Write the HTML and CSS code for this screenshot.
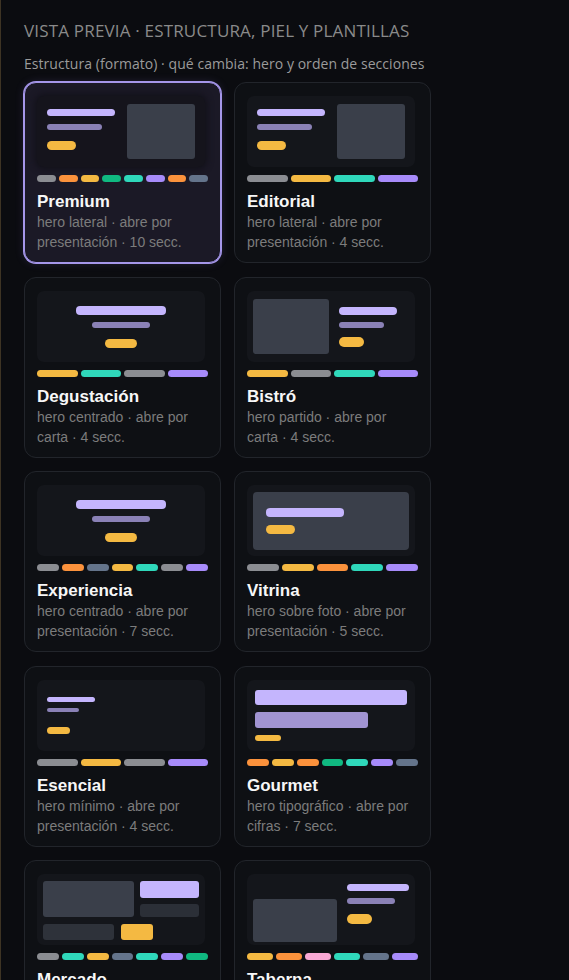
FILE: index.html
```html
<!DOCTYPE html>
<html lang="es">
<head>
<meta charset="utf-8">
<title>Vista previa</title>
<link rel="stylesheet" href="styles.css">
</head>
<body>
<main class="page">
  <h1 class="title">VISTA PREVIA · ESTRUCTURA, PIEL Y PLANTILLAS</h1>
  <p class="subtitle">Estructura (formato) · qué cambia: hero y orden de secciones</p>

  <div class="grid">
    <!-- Premium -->
    <div class="card selected">
      <div class="thumb t-lateral">
        <div class="col">
          <span class="l1"></span><span class="l2"></span><span class="btn"></span>
        </div>
        <span class="img"></span>
      </div>
      <div class="bars">
        <span class="seg gray"></span><span class="seg orange"></span><span class="seg yellow"></span><span class="seg green"></span><span class="seg teal"></span><span class="seg purple"></span><span class="seg orange"></span><span class="seg slate"></span>
      </div>
      <div class="name">Premium</div>
      <div class="desc">hero lateral · abre por presentación · 10 secc.</div>
    </div>

    <!-- Editorial -->
    <div class="card">
      <div class="thumb t-lateral">
        <div class="col">
          <span class="l1"></span><span class="l2"></span><span class="btn"></span>
        </div>
        <span class="img"></span>
      </div>
      <div class="bars">
        <span class="seg gray"></span><span class="seg yellow"></span><span class="seg teal"></span><span class="seg purple"></span>
      </div>
      <div class="name">Editorial</div>
      <div class="desc">hero lateral · abre por presentación · 4 secc.</div>
    </div>

    <!-- Degustación -->
    <div class="card">
      <div class="thumb t-center">
        <span class="l1"></span><span class="l2"></span><span class="btn"></span>
      </div>
      <div class="bars">
        <span class="seg yellow"></span><span class="seg teal"></span><span class="seg gray"></span><span class="seg purple"></span>
      </div>
      <div class="name">Degustación</div>
      <div class="desc">hero centrado · abre por carta · 4 secc.</div>
    </div>

    <!-- Bistró -->
    <div class="card">
      <div class="thumb t-split">
        <span class="img"></span>
        <div class="col">
          <span class="l1"></span><span class="l2"></span><span class="btn"></span>
        </div>
      </div>
      <div class="bars">
        <span class="seg yellow"></span><span class="seg gray"></span><span class="seg teal"></span><span class="seg purple"></span>
      </div>
      <div class="name">Bistró</div>
      <div class="desc">hero partido · abre por carta · 4 secc.</div>
    </div>

    <!-- Experiencia -->
    <div class="card">
      <div class="thumb t-center">
        <span class="l1"></span><span class="l2"></span><span class="btn"></span>
      </div>
      <div class="bars">
        <span class="seg gray"></span><span class="seg orange"></span><span class="seg slate"></span><span class="seg yellow"></span><span class="seg teal"></span><span class="seg gray"></span><span class="seg purple"></span>
      </div>
      <div class="name">Experiencia</div>
      <div class="desc">hero centrado · abre por presentación · 7 secc.</div>
    </div>

    <!-- Vitrina -->
    <div class="card">
      <div class="thumb t-photo">
        <div class="photo">
          <span class="l1"></span><span class="btn"></span>
        </div>
      </div>
      <div class="bars">
        <span class="seg gray"></span><span class="seg yellow"></span><span class="seg orange"></span><span class="seg teal"></span><span class="seg purple"></span>
      </div>
      <div class="name">Vitrina</div>
      <div class="desc">hero sobre foto · abre por presentación · 5 secc.</div>
    </div>

    <!-- Esencial -->
    <div class="card">
      <div class="thumb t-min">
        <span class="l1"></span><span class="l2"></span><span class="btn"></span>
      </div>
      <div class="bars">
        <span class="seg gray"></span><span class="seg yellow"></span><span class="seg gray"></span><span class="seg purple"></span>
      </div>
      <div class="name">Esencial</div>
      <div class="desc">hero mínimo · abre por presentación · 4 secc.</div>
    </div>

    <!-- Gourmet -->
    <div class="card">
      <div class="thumb t-type">
        <span class="b1"></span><span class="b2"></span><span class="b3"></span>
      </div>
      <div class="bars">
        <span class="seg orange"></span><span class="seg yellow"></span><span class="seg orange"></span><span class="seg green"></span><span class="seg teal"></span><span class="seg purple"></span><span class="seg slate"></span>
      </div>
      <div class="name">Gourmet</div>
      <div class="desc">hero tipográfico · abre por cifras · 7 secc.</div>
    </div>

    <!-- Mercado -->
    <div class="card">
      <div class="thumb t-grid">
        <span class="ga"></span>
        <div class="gcol"><span class="gb"></span><span class="gc"></span></div>
        <div class="grow"><span class="gd"></span><span class="ge"></span></div>
      </div>
      <div class="bars">
        <span class="seg gray"></span><span class="seg teal"></span><span class="seg yellow"></span><span class="seg slate"></span><span class="seg teal"></span><span class="seg purple"></span><span class="seg green"></span>
      </div>
      <div class="name">Mercado</div>
      <div class="desc">hero mosaico · abre por carta · 7 secc.</div>
    </div>

    <!-- Taberna -->
    <div class="card">
      <div class="thumb t-tab">
        <span class="img"></span>
        <div class="col">
          <span class="l1"></span><span class="l2"></span><span class="btn"></span>
        </div>
      </div>
      <div class="bars">
        <span class="seg yellow"></span><span class="seg orange"></span><span class="seg pink"></span><span class="seg teal"></span><span class="seg slate"></span><span class="seg purple"></span>
      </div>
      <div class="name">Taberna</div>
      <div class="desc">hero escalonado · abre por carta · 6 secc.</div>
    </div>
  </div>
</main>
</body>
</html>
```

FILE: styles.css
```css
* { box-sizing: border-box; }
html, body { margin: 0; padding: 0; }
body {
  background: #0b0c10;
  border-left: 1px solid #3e3424;
  min-height: 100vh;
  font-family: "Liberation Sans", Arial, sans-serif;
}
.page {
  padding: 20px 0 40px 23px;
}
.title {
  margin: 0;
  font-family: "Open Sans", "Noto Sans", sans-serif;
  font-weight: 400;
  font-size: 17px;
  line-height: 22px;
  letter-spacing: 0.18px;
  color: #8a8a8a;
}
.subtitle {
  margin: 12px 0 0 0;
  font-family: "Open Sans", "Noto Sans", sans-serif;
  font-size: 14px;
  line-height: 20px;
  letter-spacing: 0.05px;
  color: #9b9b9b;
}
.grid {
  margin-top: 8px;
  display: grid;
  grid-template-columns: 197px 197px;
  column-gap: 13px;
  row-gap: 13.5px;
  width: 408px;
}
.card {
  background: #0e1014;
  border: 1px solid #22252b;
  border-radius: 12px;
  padding: 13px 12px 10px 12px;
}
.card.selected {
  background: #1b1926;
  border-color: #a596ea;
  box-shadow: 0 0 0 1px #a596ea, 0 0 10px rgba(150, 130, 230, 0.18);
}
.thumb {
  width: 168px;
  height: 71px;
  border-radius: 7px;
  background: #14161b;
  margin-bottom: 8px;
}
.card.selected .thumb {
  background: #15141c;
  box-shadow: 0 0 6px 2px #121119;
}
.thumb span { display: block; }

.l1 { background: #c4b5fd; border-radius: 4px; }
.l2 { background: #8a81b6; border-radius: 3px; }
.btn { background: #f4b942; border-radius: 6px; }
.img { background: #3a3f4a; border-radius: 3px; }

/* lateral */
.t-lateral {
  display: flex;
  justify-content: space-between;
  padding: 8px 10px;
}
.t-lateral .col { display: flex; flex-direction: column; padding-top: 5px; }
.t-lateral .l1 { width: 68px; height: 7px; }
.t-lateral .l2 { width: 55px; height: 6px; margin-top: 8px; }
.t-lateral .btn { width: 29px; height: 9px; margin-top: 11px; }
.t-lateral .img { width: 68px; height: 55px; }

/* centered */
.t-center {
  display: flex;
  flex-direction: column;
  align-items: center;
  padding-top: 15px;
}
.t-center .l1 { width: 90px; height: 9px; }
.t-center .l2 { width: 58px; height: 6px; margin-top: 7px; }
.t-center .btn { width: 32px; height: 9px; margin-top: 11px; }

/* split */
.t-split {
  display: flex;
  gap: 10px;
  padding: 8px 6px;
}
.t-split .img { width: 76px; height: 55px; }
.t-split .col { display: flex; flex-direction: column; padding-top: 8px; }
.t-split .l1 { width: 58px; height: 8px; }
.t-split .l2 { width: 45px; height: 6px; margin-top: 7px; }
.t-split .btn { width: 25px; height: 10px; margin-top: 9px; }

/* over photo */
.t-photo { padding: 7px 6px 6px 6px; }
.t-photo .photo {
  height: 58px;
  background: #3a3f4a;
  border-radius: 4px;
  padding: 16px 13px;
  display: flex;
  flex-direction: column;
}
.t-photo .l1 { width: 78px; height: 10px; }
.t-photo .btn { width: 29px; height: 10px; margin-top: 8px; }

/* minimal */
.t-min {
  display: flex;
  flex-direction: column;
  padding: 17px 10px;
}
.t-min .l1 { width: 48px; height: 7px; }
.t-min .l2 { width: 32px; height: 5px; margin-top: 6px; }
.t-min .btn { width: 23px; height: 8px; margin-top: 15px; }

/* typographic */
.t-type {
  display: flex;
  flex-direction: column;
  padding: 10px 8px;
}
.t-type .b1 { width: 152px; height: 17px; background: #c4b5fd; border-radius: 3px; }
.t-type .b2 { width: 113px; height: 18px; margin-top: 7px; background: #a194d2; border-radius: 3px; }
.t-type .b3 { width: 26px; height: 6px; margin-top: 7px; background: #f4b942; border-radius: 3px; }

/* grid mosaic */
.t-grid {
  display: grid;
  grid-template-columns: 91px 59px;
  grid-template-rows: 36px 16px;
  column-gap: 6px;
  row-gap: 7px;
  padding: 7px 6px;
}
.t-grid .ga { background: #3a3f4a; border-radius: 3px; }
.t-grid .gcol { display: flex; flex-direction: column; gap: 6px; }
.t-grid .gb { height: 17px; background: #c4b5fd; border-radius: 3px; }
.t-grid .gc { height: 13px; background: #2b2f37; border-radius: 3px; }
.t-grid .grow { grid-column: 1 / 3; display: flex; gap: 7px; }
.t-grid .gd { width: 71px; background: #2e323a; border-radius: 3px; }
.t-grid .ge { width: 32px; background: #f4b942; border-radius: 3px; }

/* taberna */
.t-tab {
  display: flex;
  gap: 10px;
  padding: 10px 6px 3px 6px;
}
.t-tab .img { width: 84px; height: 43px; align-self: flex-end; }
.t-tab .col { display: flex; flex-direction: column; }
.t-tab .l1 { width: 62px; height: 7px; }
.t-tab .l2 { width: 48px; height: 6px; margin-top: 7px; }
.t-tab .btn { width: 25px; height: 10px; margin-top: 10px; }

.bars {
  display: flex;
  gap: 3px;
}
.seg {
  flex: 1;
  height: 7px;
  border-radius: 4px;
}
.gray { background: #8b8d92; }
.orange { background: #fb923c; }
.yellow { background: #f4b942; }
.green { background: #10b981; }
.teal { background: #2fd8bb; }
.purple { background: #a78bfa; }
.slate { background: #64748b; }
.pink { background: #f9a8d4; }

.name {
  margin-top: 10px;
  font-size: 17px;
  font-weight: 700;
  line-height: 20px;
  color: #f7f7f7;
}
.desc {
  font-size: 14px;
  line-height: 20px;
  color: #7c7c7c;
}
```
